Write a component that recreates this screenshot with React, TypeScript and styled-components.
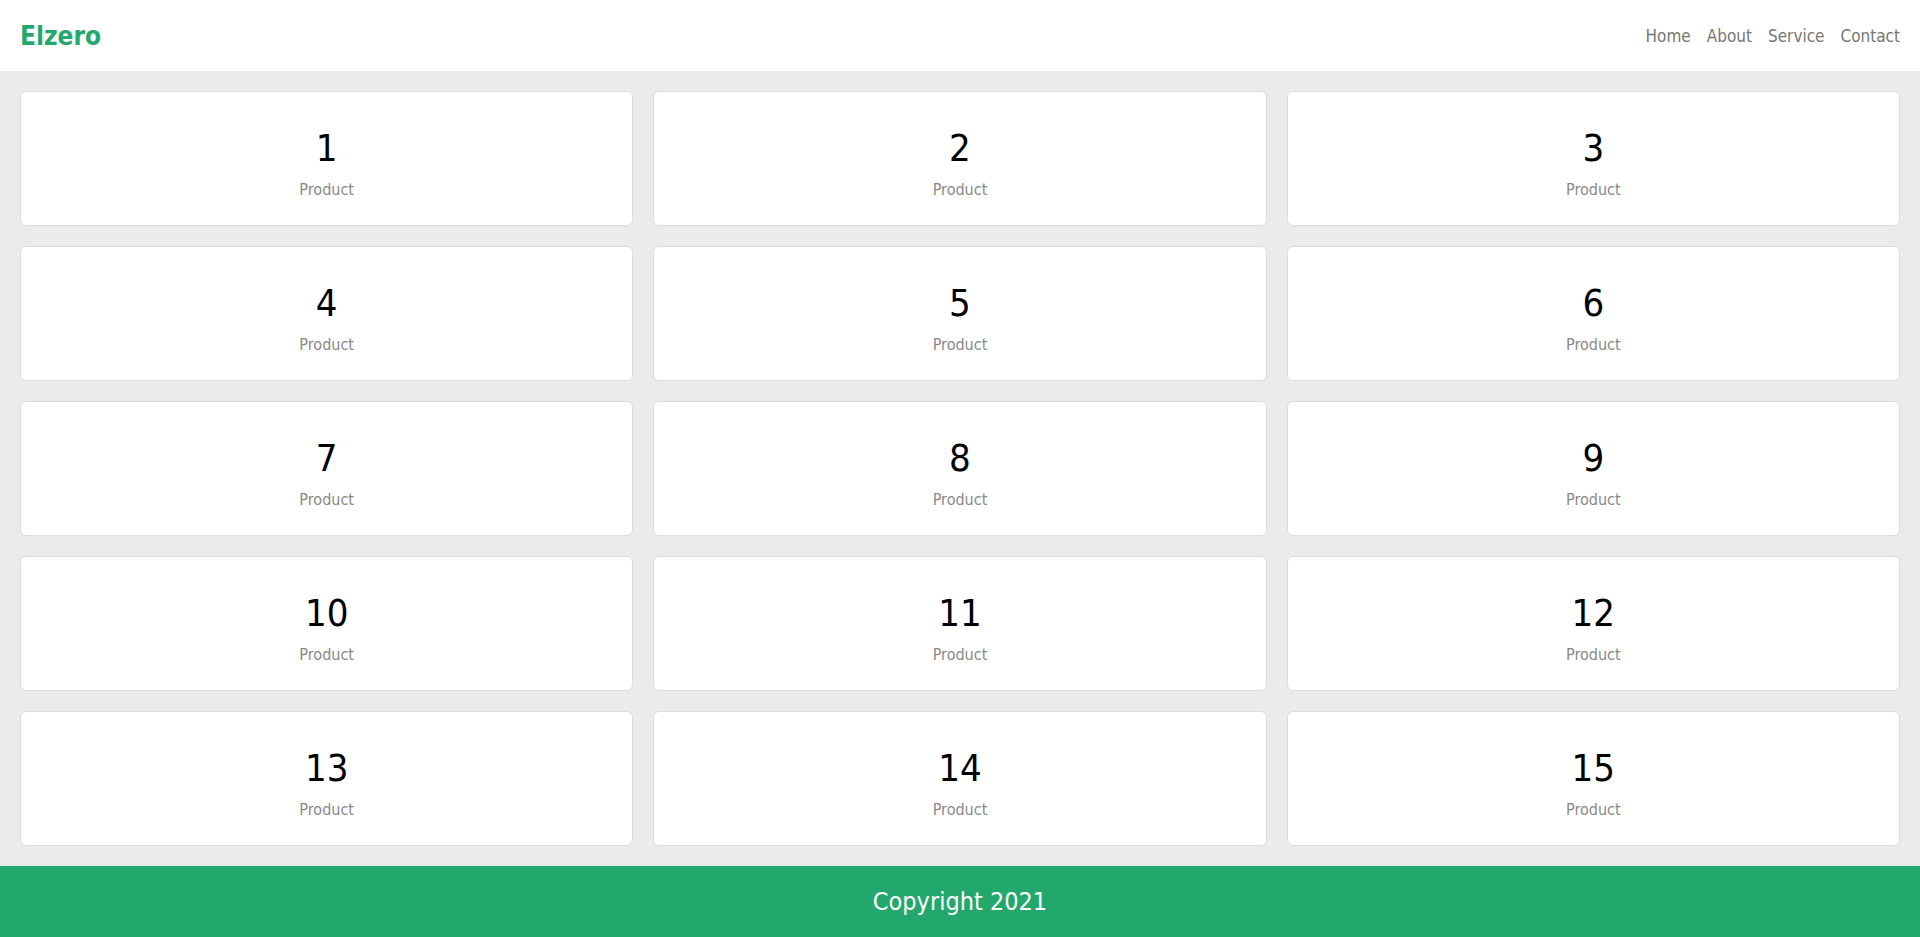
import styled, { createGlobalStyle } from "styled-components";

const GlobalStyle = createGlobalStyle`
  * {
    box-sizing: border-box;
  }
  body {
    margin: 0;
    background-color: #ebebeb;
    font-family: Tahoma, "DejaVu Sans Condensed", "DejaVu Sans", sans-serif;
  }
`;

const Page = styled.div`
  min-height: 937px;
  display: flex;
  flex-direction: column;
`;

const Header = styled.header`
  height: 71px;
  background-color: white;
  display: flex;
  justify-content: space-between;
  align-items: center;
  padding: 0 20px;
`;

const Logo = styled.a`
  color: #22a86d;
  font-size: 26px;
  font-weight: bold;
  text-decoration: none;
`;

const Nav = styled.ul`
  list-style: none;
  margin: 0;
  padding: 0;
  display: flex;
  gap: 16px;
`;

const NavLink = styled.a`
  color: #777;
  font-size: 17px;
  text-decoration: none;
`;

const Content = styled.div`
  flex: 1;
  display: grid;
  grid-template-columns: repeat(3, 1fr);
  gap: 20px;
  padding: 20px;
`;

const Card = styled.div`
  height: 135px;
  padding-top: 8px;
  background-color: white;
  border: 1px solid #dcdcdc;
  border-radius: 6px;
  display: flex;
  flex-direction: column;
  align-items: center;
  justify-content: center;
  h2 {
    margin: 0;
    font-size: 38px;
    font-weight: normal;
    color: black;
    line-height: 1.2;
  }
  p {
    margin: 9px 0 0;
    font-size: 16px;
    color: #888;
  }
`;

const Footer = styled.footer`
  height: 71px;
  background-color: #22a86d;
  color: white;
  font-size: 25px;
  display: flex;
  align-items: center;
  justify-content: center;
`;

function App() {
  const products = Array.from({ length: 15 }, (_, i) => i + 1);
  return (
    <Page>
      <GlobalStyle />
      <Header>
        <Logo href="#">Elzero</Logo>
        <Nav>
          <li><NavLink href="#">Home</NavLink></li>
          <li><NavLink href="#">About</NavLink></li>
          <li><NavLink href="#">Service</NavLink></li>
          <li><NavLink href="#">Contact</NavLink></li>
        </Nav>
      </Header>
      <Content>
        {products.map((n) => (
          <Card key={n}>
            <h2>{n}</h2>
            <p>Product</p>
          </Card>
        ))}
      </Content>
      <Footer>Copyright 2021</Footer>
    </Page>
  );
}

export default App;
